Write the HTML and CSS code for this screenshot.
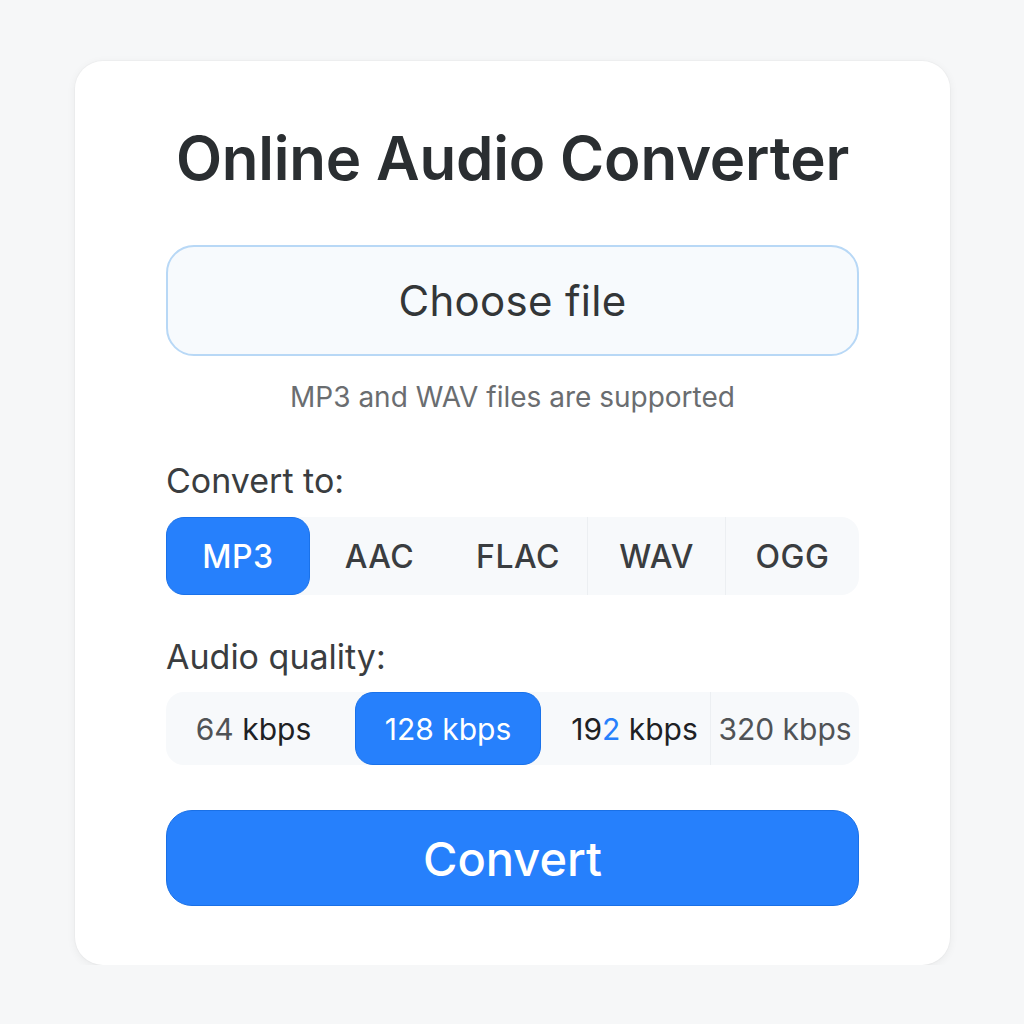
FILE: index.html
```html
<!DOCTYPE html>
<html lang="en">
<head>
    <meta charset="UTF-8">
    <meta name="viewport" content="width=device-width, initial-scale=1.0">
    <title>Online Audio Converter</title>
    <link rel="stylesheet" href="styles.css">
</head>
<body>
    <div class="card">
        <h1>Online Audio Converter</h1>

        <button class="file-picker">Choose file</button>
        <p class="hint">MP3 and WAV files are supported</p>

        <!-- Output format -->
        <div class="label">Convert to:</div>
        <div class="segments formats">
            <button class="seg active">MP3</button>
            <button class="seg">AAC</button>
            <button class="seg">FLAC</button>
            <button class="seg line">WAV</button>
            <button class="seg line">OGG</button>
        </div>

        <!-- Bitrate -->
        <div class="label second">Audio quality:</div>
        <div class="segments quality">
            <button class="seg first"><span class="num">64</span> kbps</button>
            <button class="seg active">128 kbps</button>
            <button class="seg third">19<span class="hl">2</span> kbps</button>
            <button class="seg line"><span class="num">320</span> <span class="num">kbps</span></button>
        </div>

        <button class="convert">Convert</button>
    </div>
</body>
</html>
```

FILE: styles.css
```css
body {
    margin: 0;
    background: #f6f7f8;
    font-family: Inter, "Noto Sans", sans-serif;
    color: #2b2f33;
}
.card {
    width: 875px;
    box-sizing: border-box;
    margin: 61px 0 0 75px;
    padding: 62px 91px 59px;
    background: white;
    border-radius: 28px;
    box-shadow: 0 2px 10px rgba(0, 0, 0, 0.06), 0 0 0 1px rgba(0, 0, 0, 0.02);
}
h1 {
    margin: 0;
    text-align: center;
    font-size: 60px;
    line-height: 70px;
    font-weight: 600;
    letter-spacing: -0.2px;
    color: #2a2e31;
}
button {
    font-family: inherit;
    border: none;
    cursor: pointer;
}
.file-picker {
    display: block;
    width: 100%;
    height: 111px;
    margin-top: 52px;
    background: #f7fafd;
    border: 2.5px solid #b8d8f6;
    border-radius: 28px;
    font-size: 42px;
    font-weight: 400;
    letter-spacing: 0.3px;
    color: #333638;
}
.hint {
    margin: 24px 0 0;
    text-align: center;
    font-size: 28px;
    line-height: 34px;
    color: #6a6d70;
}
.label {
    margin-top: 47px;
    font-size: 34px;
    line-height: 40px;
    color: #3a3d40;
}
.label.second {
    margin-top: 42px;
}
.segments {
    display: grid;
    margin-top: 16px;
    background: #f7f9fb;
    border-radius: 18px;
}
.formats {
    grid-template-columns: 144px 139px 138px 138px 1fr;
    height: 78px;
}
.quality {
    grid-template-columns: 189px 186px 169px 1fr;
    height: 73px;
    margin-top: 15px;
}
.seg {
    background: transparent;
    font-size: 32px;
    font-weight: 500;
    color: #3a3d40;
    border-radius: 18px;
    letter-spacing: 0.5px;
}
.quality .seg {
    font-size: 30px;
    font-weight: 400;
    letter-spacing: 0;
    color: #1e2124;
    padding: 0;
}
.quality .seg.first {
    padding-right: 14px;
}
.quality .seg.third {
    padding-left: 18px;
}
.seg.line {
    border-left: 1px solid #eceff2;
    border-radius: 0;
}
.seg.active {
    background: #2680fc;
    color: white;
    border: 1px solid #1a72ea;
}
.quality .seg.active {
    color: white;
}
.num {
    color: #505356;
}
.hl {
    color: #2680fc;
}
.convert {
    display: block;
    width: 100%;
    height: 96px;
    margin-top: 45px;
    background: #2680fc;
    border: 1px solid #1a70e6;
    border-radius: 26px;
    color: white;
    font-size: 47px;
    font-weight: 500;
}
```
